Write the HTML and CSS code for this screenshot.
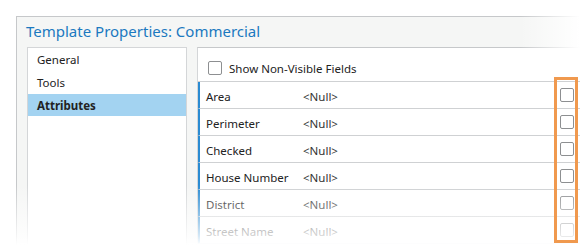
FILE: index.html
```html
<!DOCTYPE html>
<html>
<head>
    <title>Template Properties</title>
    <link rel="stylesheet" href="styles.css">
</head>
<body>
    <div class="window">
        <div class="title">Template Properties: Commercial</div>
        <div class="content">
            <ul class="sidebar">
                <li>General</li>
                <li>Tools</li>
                <li class="selected">Attributes</li>
            </ul>
            <div class="main">
                <label class="toggle"><span class="box"></span>Show Non-Visible Fields</label>
                <div class="row"><span class="name">Area</span><span class="value">&lt;Null&gt;</span><span class="box"></span></div>
                <div class="row"><span class="name">Perimeter</span><span class="value">&lt;Null&gt;</span><span class="box"></span></div>
                <div class="row"><span class="name">Checked</span><span class="value">&lt;Null&gt;</span><span class="box"></span></div>
                <div class="row"><span class="name">House Number</span><span class="value">&lt;Null&gt;</span><span class="box"></span></div>
                <div class="row"><span class="name">District</span><span class="value">&lt;Null&gt;</span><span class="box"></span></div>
                <div class="row"><span class="name">Street Name</span><span class="value">&lt;Null&gt;</span><span class="box"></span></div>
            </div>
        </div>
    </div>
    <div class="fade-right"></div>
    <div class="fade-bottom"></div>
    <div class="highlight"></div>
</body>
</html>
```

FILE: styles.css
```css
body {
    font-family: "Segoe UI", "Noto Sans", sans-serif;
    background: #ffffff;
    margin: 0;
    width: 580px;
    height: 245px;
    overflow: hidden;
    position: relative;
}

.window {
    margin: 16px 0 0 16px;
    border-top: 1px solid #c6c8ca;
    border-left: 1px solid #c6c8ca;
    background: #f5f6f5;
    height: 228px;
    overflow: hidden;
}

.title {
    height: 30px;
    padding-left: 9px;
    font-size: 15px;
    line-height: 29px;
    color: #1b79c0;
}

.content {
    display: flex;
    padding-left: 10px;
}

.sidebar {
    list-style: none;
    margin: 0;
    padding: 0;
    width: 158px;
    height: 198px;
    background: #ffffff;
    border: 1px solid #d4d6d8;
    border-bottom: none;
}

.sidebar li {
    height: 23px;
    line-height: 23px;
    padding-left: 9px;
    font-size: 11.5px;
    color: #222222;
}

.sidebar li.selected {
    background: #a3d3f1;
    font-weight: bold;
    height: 22px;
}

.main {
    margin-left: 10px;
    flex: 1;
    height: 198px;
    overflow: hidden;
    background: #ffffff;
    border-top: 1px solid #c6c8ca;
    border-left: 1px solid #d4d6d8;
}

.toggle {
    display: flex;
    align-items: center;
    height: 34px;
    padding: 7px 0 0 10px;
    box-sizing: border-box;
    border-bottom: 1px solid #cfd1d3;
    font-size: 11.5px;
    color: #222222;
}

.toggle .box {
    margin-right: 7px;
}

.box {
    display: inline-block;
    width: 12px;
    height: 12px;
    border: 1px solid #8d8f91;
    border-radius: 2px;
    background: #ffffff;
}

.row {
    display: flex;
    align-items: center;
    height: 26px;
    padding-top: 2px;
    box-sizing: border-box;
    height: 27px;
    border-bottom: 1px solid #cfd1d3;
    border-left: 3px solid #2a8bd2;
    margin-left: -1px;
    font-size: 11.5px;
    color: #222222;
}

.row .name {
    width: 97px;
    padding-left: 6px;
}

.row .value {
    flex: 1;
    color: #333333;
}

.row .box {
    margin: -2px 6px 0 0;
}

.fade-right {
    position: absolute;
    top: 0;
    right: 0;
    width: 60px;
    height: 80px;
    background: linear-gradient(to right, rgba(255, 255, 255, 0), #ffffff);
}

.fade-bottom {
    position: absolute;
    left: 0;
    right: 0;
    top: 185px;
    height: 60px;
    background: linear-gradient(to bottom, rgba(255, 255, 255, 0), rgba(255, 255, 255, 0.8) 85%, #ffffff);
}

.highlight {
    position: absolute;
    left: 554px;
    top: 77px;
    width: 18px;
    height: 160px;
    border: 3px solid #f0994e;
}
```
